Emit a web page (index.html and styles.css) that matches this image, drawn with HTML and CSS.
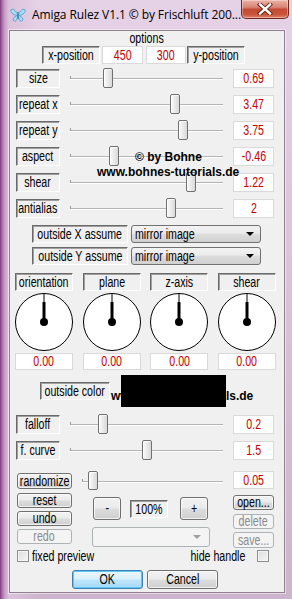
FILE: index.html
```html
<!DOCTYPE html>
<html>
<head>
<meta charset="utf-8">
<link rel="stylesheet" href="styles.css">
</head>
<body>
<div class="window">
  <div class="titlebar">
    <svg class="appicon" width="16" height="16" viewBox="0 0 16 16">
      <path d="M8 8 C6 3 2 1 1 3 C0 5 3 8 7 8.5 C4 10 2 12 4 14 C6 15 7 12 8 9 Z" fill="#a9dcf4" stroke="#3e9ccf" stroke-width="0.8"/>
      <path d="M8 8 C10 3 14 1 15 3 C16 5 13 8 9 8.5 C12 10 14 12 12 14 C10 15 9 12 8 9 Z" fill="#a9dcf4" stroke="#3e9ccf" stroke-width="0.8"/>
      <path d="M8 5 L8 12" stroke="#2b6f99" stroke-width="1"/>
    </svg>
    <span class="title">Amiga Rulez V1.1 © by Frischluft 200...</span>
    <div class="close">
      <svg width="16" height="12" viewBox="0 0 16 12">
        <path d="M3 1.5 L13 10.5 M13 1.5 L3 10.5" stroke="#5a1e17" stroke-width="4.2" stroke-linecap="square"/>
        <path d="M3 1.5 L13 10.5 M13 1.5 L3 10.5" stroke="#ffffff" stroke-width="2.4" stroke-linecap="square"/>
      </svg>
    </div>
  </div>

  <div class="client">
    <div class="legend"><span class="t">options</span></div>
    <div class="posrow">
      <div class="lbl w58"><span class="t">x-position</span></div>
      <div class="val w41 g2"><span class="t">450</span></div>
      <div class="val w40 g3"><span class="t">300</span></div>
      <div class="lbl w58 g1"><span class="t">y-position</span></div>
    </div>

    <div class="sliders">
      <div class="watermark wm1">© by Bohne</div>
      <div class="watermark wm2">www.bohnes-tutorials.de</div>
      <div class="srow"><div class="lbl w44"><span class="t">size</span></div><div class="slider"><div class="track"></div><div class="thumb" style="left:43px"></div></div><div class="val w41"><span class="t">0.69</span></div></div>
      <div class="srow"><div class="lbl w44"><span class="t">repeat x</span></div><div class="slider"><div class="track"></div><div class="thumb" style="left:110px"></div></div><div class="val w41"><span class="t">3.47</span></div></div>
      <div class="srow"><div class="lbl w44"><span class="t">repeat y</span></div><div class="slider"><div class="track"></div><div class="thumb" style="left:118px"></div></div><div class="val w41"><span class="t">3.75</span></div></div>
      <div class="srow"><div class="lbl w44"><span class="t">aspect</span></div><div class="slider"><div class="track"></div><div class="thumb" style="left:49px"></div></div><div class="val w41"><span class="t">-0.46</span></div></div>
      <div class="srow"><div class="lbl w44"><span class="t">shear</span></div><div class="slider"><div class="track"></div><div class="thumb" style="left:126px"></div></div><div class="val w41"><span class="t">1.22</span></div></div>
      <div class="srow"><div class="lbl w44"><span class="t">antialias</span></div><div class="slider"><div class="track"></div><div class="thumb" style="left:106px"></div></div><div class="val w41"><span class="t">2</span></div></div>
    </div>

    <div class="assume">
      <div class="arow"><div class="lbl w96"><span class="t">outside X assume</span></div><div class="combo"><span class="t tl">mirror image</span><i class="arrow"></i></div></div>
      <div class="arow"><div class="lbl w96"><span class="t">outside Y assume</span></div><div class="combo"><span class="t tl">mirror image</span><i class="arrow"></i></div></div>
    </div>

    <div class="dials">
      <div class="dial">
        <div class="lbl"><span class="t">orientation</span></div>
        <svg class="knob" width="58" height="58" viewBox="0 0 58 58"><circle cx="29" cy="29" r="28.5" fill="#fff" stroke="#000" stroke-width="1"/><path d="M29 0.5 L29 10" stroke="#000" stroke-width="1"/><path d="M29 9 L29 28" stroke="#000" stroke-width="3"/><circle cx="29" cy="29" r="4" fill="#000"/></svg>
        <div class="val"><span class="t">0.00</span></div>
      </div>
      <div class="dial">
        <div class="lbl"><span class="t">plane</span></div>
        <svg class="knob" width="58" height="58" viewBox="0 0 58 58"><circle cx="29" cy="29" r="28.5" fill="#fff" stroke="#000" stroke-width="1"/><path d="M29 0.5 L29 10" stroke="#000" stroke-width="1"/><path d="M29 9 L29 28" stroke="#000" stroke-width="3"/><circle cx="29" cy="29" r="4" fill="#000"/></svg>
        <div class="val"><span class="t">0.00</span></div>
      </div>
      <div class="dial">
        <div class="lbl"><span class="t">z-axis</span></div>
        <svg class="knob" width="58" height="58" viewBox="0 0 58 58"><circle cx="29" cy="29" r="28.5" fill="#fff" stroke="#000" stroke-width="1"/><path d="M29 0.5 L29 10" stroke="#000" stroke-width="1"/><path d="M29 9 L29 28" stroke="#000" stroke-width="3"/><circle cx="29" cy="29" r="4" fill="#000"/></svg>
        <div class="val"><span class="t">0.00</span></div>
      </div>
      <div class="dial">
        <div class="lbl"><span class="t">shear</span></div>
        <svg class="knob" width="58" height="58" viewBox="0 0 58 58"><circle cx="29" cy="29" r="28.5" fill="#fff" stroke="#000" stroke-width="1"/><path d="M29 0.5 L29 10" stroke="#000" stroke-width="1"/><path d="M29 9 L29 28" stroke="#000" stroke-width="3"/><circle cx="29" cy="29" r="4" fill="#000"/></svg>
        <div class="val"><span class="t">0.00</span></div>
      </div>
    </div>

    <div class="colorrow">
      <div class="lbl w70"><span class="t">outside color</span></div>
      <div class="watermark wm3">www.bohnes-tutorials.de</div>
      <div class="swatch"></div>
    </div>

    <div class="sliders2">
      <div class="srow"><div class="lbl w44"><span class="t">falloff</span></div><div class="slider"><div class="track"></div><div class="thumb" style="left:38px"></div></div><div class="val w41"><span class="t">0.2</span></div></div>
      <div class="srow"><div class="lbl w44"><span class="t">f. curve</span></div><div class="slider"><div class="track"></div><div class="thumb" style="left:82px"></div></div><div class="val w41"><span class="t">1.5</span></div></div>
    </div>

    <div class="rrow">
      <div class="btn rbtn"><span class="t">randomize</span></div>
      <div class="slider rslider"><div class="track"></div><div class="thumb" style="left:16px"></div></div>
      <div class="val w41"><span class="t">0.05</span></div>
    </div>

    <div class="lower">
      <div class="lcol">
        <div class="btn sbtn"><span class="t">reset</span></div>
        <div class="btn sbtn"><span class="t">undo</span></div>
        <div class="btn sbtn dis"><span class="t">redo</span></div>
      </div>
      <div class="mcol">
        <div class="zoomrow">
          <div class="btn zbtn"><span class="t">-</span></div>
          <div class="zoomval"><span class="t">100%</span></div>
          <div class="btn zbtn plus"><span class="t">+</span></div>
        </div>
        <div class="combo dis wide"><span class="t tl"></span><i class="arrow"></i></div>
      </div>
      <div class="rcol">
        <div class="btn obtn"><span class="t">open...</span></div>
        <div class="btn obtn dis"><span class="t">delete</span></div>
        <div class="btn obtn dis tall"><span class="t">save...</span></div>
      </div>
    </div>

    <div class="checks">
      <span class="cb"></span><span class="cbtext"><span class="t tl">fixed preview</span></span>
      <span class="cbtext right"><span class="t tr">hide handle</span></span><span class="cb cb2"></span>
    </div>

    <div class="okrow">
      <div class="btn big ok"><span class="t">OK</span></div>
      <div class="btn big"><span class="t">Cancel</span></div>
    </div>
  </div>
</div>
</body>
</html>
```

FILE: styles.css
```css
* { box-sizing: border-box; }
html, body { margin: 0; padding: 0; }
body {
  width: 292px; height: 599px; overflow: hidden;
  font-family: "Liberation Sans", Arial, sans-serif;
  font-size: 14px; color: #000;
}
.t {
  display: inline-block; white-space: nowrap; flex: none;
  transform: scaleX(0.76); transform-origin: center;
}
.t.tl { transform-origin: left center; }
.t.tr { transform-origin: right center; }

.window {
  width: 292px; height: 599px;
  display: flex; flex-direction: column;
  padding: 0 7px 6px 9px;
  background:
    linear-gradient(to right, #7c3c7a 0, #a86aa6 2px, #c9a2c8 5px, #dcc2dc 9px, rgba(230,214,230,0) 40px),
    linear-gradient(to bottom, #e6d2e6 0, #dcc4dc 40%, #cdb4cd 100%);
}
.titlebar {
  height: 30px; flex: none;
  display: flex; align-items: flex-start;
}
.appicon { margin: 7px 0 0 1px; flex: none; }
.title {
  margin: 6px 0 0 6px;
  font-family: "Open Sans", "Noto Sans", sans-serif; font-size: 12px; color: #000;
  letter-spacing: -0.1px; white-space: nowrap;
}
.close {
  margin-left: auto; margin-right: -3px;
  width: 48px; height: 19px; flex: none;
  border: 1px solid #6e2a22; border-top: none;
  border-radius: 0 0 5px 5px;
  background: linear-gradient(to bottom, #eab2a6 0, #d98675 40%, #c44a33 52%, #c9553a 80%, #e2836a 100%);
  display: flex; align-items: center; justify-content: center;
  box-shadow: inset 0 0 0 1px rgba(255,255,255,0.35);
}
.client {
  flex: 1;
  background: #f0f0f0;
  border: 1px solid #8f7f8f;
  box-shadow: 0 0 0 1px rgba(255,255,255,0.5);
  display: flex; flex-direction: column;
  position: relative;
}
.legend { height: 14px; line-height: 14px; display: flex; justify-content: center; }

.lbl {
  height: 18px; line-height: 16px;
  display: flex; align-items: center; justify-content: center;
  background: #f0f0f0;
  border: 1px solid; border-color: #6a6a6a #ffffff #ffffff #6a6a6a;
  box-shadow: inset 1px 1px 0 #a0a0a0;
  flex: none;
}
.val {
  height: 18px; line-height: 16px;
  display: flex; align-items: center; justify-content: center;
  color: #c40000;
  background: #fff; border: 1px solid #d9d9d9;
  flex: none;
}
.w58 { width: 58px; } .w44 { width: 44px; } .w41 { width: 41px; } .w40 { width: 40px; }
.w96 { width: 96px; } .w70 { width: 70px; }
.g1 { margin-left: 1px; } .g2 { margin-left: 2px; } .g3 { margin-left: 3px; }

.posrow { display: flex; margin-top: 1px; padding-left: 32px; }

.sliders { position: relative; margin-top: 5px; display: flex; flex-direction: column; gap: 7px; }
.sliders2 { margin-top: 8px; display: flex; flex-direction: column; gap: 7px; }
.srow { display: flex; height: 19px; padding-left: 6px; }
.srow .lbl, .srow .val { height: 19px; line-height: 17px; }
.slider { position: relative; width: 173px; height: 19px; flex: none; padding: 0 10px; }
.track {
  position: relative; top: 9px; height: 2px;
  border-top: 1px solid #b4b4b4; border-bottom: 1px solid #ffffff;
}
.track::before {
  content: ""; position: absolute; left: 0; top: -3px; width: 1px; height: 3px; background: #9a9a9a;
}
.thumb {
  position: absolute; top: -1px; width: 10px; height: 20px;
  border: 1px solid #707070; border-radius: 2px;
  background: linear-gradient(to right, #fafafa 0, #eaeaea 50%, #d8d8d8 100%);
  box-shadow: inset 1px 1px 0 #fff;
}
.watermark {
  position: absolute; z-index: 2;
  font-family: "Liberation Sans", Arial, sans-serif; font-weight: bold; font-size: 12px;
  color: #000; white-space: nowrap; line-height: 14px;
}
.wm1 { left: 125px; top: 81px; }
.wm2 { left: 87px; top: 96px; }

.assume { margin-top: 7px; display: flex; flex-direction: column; gap: 4px; padding-left: 22px; }
.arow { display: flex; height: 18px; }
.combo {
  width: 130px; height: 18px; margin-left: 3px;
  border: 1px solid #707070; border-radius: 3px;
  background: linear-gradient(to bottom, #f3f3f3 0, #ebebeb 45%, #dddddd 50%, #d0d0d0 100%);
  display: flex; align-items: center; padding: 0 6px 0 3px;
  line-height: 16px;
}
.combo .t { flex: 1; }
.arrow {
  width: 0; height: 0; border-left: 4px solid transparent; border-right: 4px solid transparent;
  border-top: 4px solid #000; flex: none;
}
.combo.dis { border-color: #adb2b5; background: #f4f4f4; }
.combo.dis .arrow { border-top-color: #a0a0a0; }
.combo.wide { width: 118px; height: 20px; margin: 7px 0 0 0; padding-right: 8px; }

.dials {
  margin-top: 8px; padding: 0 8px 0 5px;
  display: flex; justify-content: space-between;
}
.dial { width: 58px; display: flex; flex-direction: column; }
.dial .lbl { width: 58px; }
.knob { display: block; margin-top: 2px; }
.dial .val { height: 17px; line-height: 15px; margin-top: 2px; }

.colorrow { position: relative; margin-top: 5px; height: 32px; display: flex; align-items: center; padding-left: 30px; }
.swatch { width: 105px; height: 32px; background: #000; margin-left: 11px; position: relative; z-index: 3; }
.wm3 { left: 101px; top: 14px; }

.rrow { display: flex; margin-top: 11px; padding-left: 7px; height: 18px; }
.rrow .val { height: 18px; margin-top: 0; }
.rbtn { width: 55px; height: 16px; margin-top: 2px; }
.rslider { width: 161px; height: 18px; }
.rslider .track { top: 10px; }
.rslider .thumb { top: 0; height: 19px; }

.btn {
  border: 1px solid #707070; border-radius: 3px;
  background: linear-gradient(to bottom, #f2f2f2 0, #ebebeb 48%, #dddddd 52%, #cfcfcf 100%);
  box-shadow: inset 0 0 0 1px rgba(255,255,255,0.7);
  flex: none;
  display: flex; align-items: center; justify-content: center;
  line-height: 13px;
}
.btn.dis { border-color: #adb2b5; background: #f4f4f4; color: #8a8a8a; box-shadow: none; }

.lower { display: flex; margin-top: 4px; height: 54px; }
.lcol { display: flex; flex-direction: column; gap: 3px; padding-left: 7px; }
.sbtn { width: 55px; height: 15px; }
.mcol { margin-left: 20px; width: 118px; display: flex; flex-direction: column; }
.zoomrow { display: flex; margin-top: 4px; height: 23px; align-items: center; }
.zbtn { width: 28px; height: 23px; margin-left: 1px; }
.zbtn.plus { margin-left: 12px; }
.zoomval {
  width: 38px; height: 18px; margin-left: 9px; line-height: 16px;
  display: flex; align-items: center; justify-content: center;
  border: 1px solid; border-color: #6a6a6a #ffffff #ffffff #6a6a6a;
  box-shadow: inset 1px 1px 0 #a0a0a0;
}
.rcol { margin-left: 23px; display: flex; flex-direction: column; gap: 4px; margin-top: 2px; }
.obtn { width: 41px; height: 15px; }
.obtn.tall { height: 16px; margin-top: -1px; }

.checks { display: flex; align-items: center; margin-top: 2px; height: 13px; padding-left: 7px; }
.cb {
  width: 12px; height: 12px; flex: none;
  border: 1px solid #8e8f8f;
  background: linear-gradient(135deg, #dcdcdc 0, #f6f6f6 100%);
  box-shadow: inset 0 0 0 1px #f4f4f4;
}
.cbtext { margin-left: 3px; white-space: nowrap; display: flex; }
.cbtext.right { margin-left: auto; }
.cb2 { margin-left: 12px; margin-right: 15px; }

.okrow { display: flex; margin-top: 8px; padding-left: 62px; gap: 4px; }
.big { width: 71px; height: 19px; }
.ok {
  border-color: #3c7fb1;
  background: linear-gradient(to bottom, #eaf6fd 0, #d9f0fc 48%, #bee6fd 52%, #a7d9f5 100%);
  box-shadow: inset 0 0 0 1px #5ec7f7;
}
```
